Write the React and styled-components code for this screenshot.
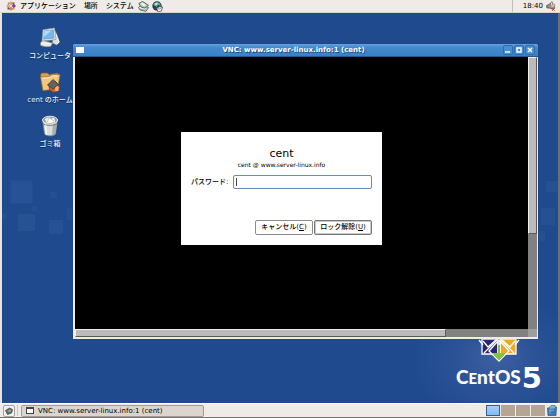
import React from "react";
import styled, { createGlobalStyle } from "styled-components";

const GlobalStyle = createGlobalStyle`
  * { box-sizing: border-box; }
  body {
    margin: 0;
    font-family: "DejaVu Sans", "Noto Sans CJK JP", sans-serif;
    font-size: 7px;
    font-weight: 500;
    line-height: 10px;
    color: #000;
  }
  button, input { font: inherit; color: inherit; margin: 0; padding: 0; }
  svg { display: block; flex: none; }
`;

const Screen = styled.div`
  min-height: 100vh;
  display: grid;
  grid-template-rows: 13px 1fr 15px;
  background: #1f4b8e;
`;

const TopPanel = styled.header`
  display: flex;
  align-items: center;
  padding: 0 4px 0 6px;
  background: #efebe7;
  border-bottom: 1px solid #d8d3cd;
`;

const Menus = styled.nav`
  display: flex;
  align-items: center;
  gap: 8px;
  margin: 0 4px;
`;

const MenuButton = styled.button`
  border: 0;
  background: none;
  white-space: nowrap;
`;

const Launcher = styled.button`
  border: 0;
  background: none;
  margin-right: 3px;
`;

const Tray = styled.div`
  display: flex;
  align-items: center;
  gap: 3px;
  align-self: stretch;
  margin-left: auto;
  padding-left: 10px;
  border-left: 1px solid #c5beb7;
`;

const Desktop = styled.main`
  position: relative;
  display: flex;
  justify-content: space-between;
  border-left: 2px solid #e8e4df;
  border-right: 2px solid #6b7078;
  overflow: hidden;
  background:
    radial-gradient(ellipse 84px 66px at calc(100% - 62px) calc(100% - 44px), #3d5fa2 0%, #2b5296 50%, transparent 100%),
    #1f4b8e;
`;

const Squares = styled.svg`
  position: absolute;
  top: 160px;
  ${(p) => (p.$side === "right" ? "right: 0;" : "left: 0;")}
`;

const IconList = styled.ul`
  list-style: none;
  margin: 0;
  padding: 14px 0 0;
  width: 96px;
`;

const IconItem = styled.li`
  display: flex;
  flex-direction: column;
  align-items: center;
  height: 44px;
  gap: 2px;
`;

const IconLabel = styled.span`
  color: #eef3fb;
  white-space: nowrap;
  text-shadow: 0 1px 1px #0c2450;
`;

const Brand = styled.div`
  display: flex;
  flex-direction: column;
  align-items: center;
  align-self: flex-end;
  padding: 0 16px 11px 0;
  color: #fff;
`;

const BrandName = styled.div`
  display: flex;
  align-items: center;
  gap: 1px;
  font-family: Lato, sans-serif;
  font-weight: 900;
  font-size: 19px;
  line-height: 28px;
`;

const SmallCap = styled.span`
  font-size: 15px;
  text-transform: uppercase;
`;

const BrandVersion = styled.span`
  font-family: "DejaVu Sans", sans-serif;
  font-weight: 700;
  font-size: 29px;
`;

const Window = styled.section`
  position: absolute;
  inset: 31px 20px 64px 71px;
  display: flex;
  flex-direction: column;
  border-radius: 3px 3px 0 0;
  background: #efebe5;
  box-shadow: 0 0 1px #16305c;
`;

const TitleBar = styled.div`
  display: grid;
  grid-template-columns: 12px 1fr 36px;
  align-items: center;
  height: 13px;
  padding: 0 3px;
  border-radius: 3px 3px 0 0;
  background: linear-gradient(#65a3dd, #4289d0 30%, #3b80c5);
  border-bottom: 1px solid #28588e;
`;

const WindowTitle = styled.h1`
  margin: 0;
  font-size: 7px;
  font-weight: 700;
  text-align: center;
  color: #fff;
  text-shadow: 1px 1px 0 #1d4b83;
  white-space: nowrap;
`;

const WindowControls = styled.div`
  display: flex;
  justify-content: flex-end;
  gap: 1px;
`;

const ControlButton = styled.button`
  width: 10px;
  height: 10px;
  border: 1px solid #2e6cae;
  border-radius: 2px;
  background: #4a8fd2;
`;

const Viewport = styled.div`
  flex: 1;
  display: grid;
  grid-template-columns: 1fr 9px;
  grid-template-rows: 1fr 8px;
  padding: 0 1px 2px 2px;
`;

const RemoteScreen = styled.div`
  display: flex;
  align-items: center;
  justify-content: center;
  padding: 0 40px 10px 0;
  background: #000;
`;

const Track = styled.div`
  display: flex;
  flex-direction: ${(p) => (p.$vertical ? "column" : "row")};
  background: #81817f;
`;

const Thumb = styled.div`
  flex: 0 0 ${(p) => p.$length};
  background: #bcbaba;
  border: 1px solid #efefed;
  border-right-color: #5c5a58;
  border-bottom-color: #5c5a58;
`;

const Corner = styled.div`
  background: #a09e9b;
`;

const Dialog = styled.form`
  display: flex;
  flex-direction: column;
  width: 201px;
  padding: 15px 10px 10px;
  background: #fff;
`;

const UserName = styled.h2`
  margin: 0;
  font-size: 11px;
  line-height: 14px;
  font-weight: 400;
  text-align: center;
  color: #000;
`;

const HostName = styled.p`
  margin: 0 0 6px;
  font-size: 6px;
  line-height: 8px;
  text-align: center;
`;

const PasswordRow = styled.div`
  display: flex;
  align-items: center;
  gap: 4px;
  margin-bottom: 31px;
`;

const PasswordLabel = styled.label`
  width: 38px;
  white-space: nowrap;
`;

const PasswordInput = styled.input`
  flex: 1;
  min-width: 0;
  height: 14px;
  padding: 0 3px;
  border: 1px solid #6b8ab8;
  border-radius: 2px;
  outline: 0;
  background: linear-gradient(#444, #444) 2px 2px / 1px 8px no-repeat #fff;
`;

const Actions = styled.div`
  display: flex;
  justify-content: flex-end;
  gap: 1px;
`;

const ActionButton = styled.button`
  width: 58px;
  height: 15px;
  border: 1px solid ${(p) => (p.$primary ? "#777" : "#8c8c86")};
  border-radius: 2px;
  background: #fff;
  box-shadow: ${(p) => (p.$primary ? "inset 0 0 0 1px #c9c9c9" : "none")};
  white-space: nowrap;
`;

const BottomPanel = styled.footer`
  display: flex;
  align-items: center;
  padding: 0 3px;
  background: #efebe7;
  border-top: 1px solid #fff;
  border-bottom: 1px solid #77736f;
`;

const ShowDesktop = styled.button`
  display: flex;
  align-items: center;
  justify-content: center;
  width: 12px;
  height: 12px;
  border: 1px solid #a9a29b;
  border-radius: 2px;
  background: #f3f0ed;
`;

const Divider = styled.div`
  align-self: stretch;
  width: 1px;
  margin: 1px 3px 1px 2px;
  background: #cdc6bf;
`;

const TaskButton = styled.button`
  display: flex;
  align-items: center;
  gap: 4px;
  flex: 0 1 183px;
  height: 12px;
  padding: 0 4px;
  border: 1px solid #a39b93;
  border-radius: 2px;
  background: #dcd5cd;
  white-space: nowrap;
`;

const Workspaces = styled.div`
  display: flex;
  gap: 1px;
  margin: 0 2px 0 auto;
`;

const Workspace = styled.button`
  width: 14px;
  height: 11px;
  border: ${(p) => (p.$active ? "1px solid #34608f" : "0")};
  background: ${(p) => (p.$active ? "linear-gradient(#a6d0fb, #84b8f2)" : "#b5a693")};
`;

const TrashButton = styled.button`
  border: 0;
  background: none;
`;

const CentIcon = () => (
  <svg width="10" height="10" viewBox="0 0 10 10">
    <path d="M2 1.500h2.500v3H1.500z" fill="#b884a8" />
    <path d="M5.500 1.500h3v3h-3z" fill="#7d4f9c" />
    <path d="M1.500 5.500h3v3h-3z" fill="#5e4c94" />
    <path d="M5.500 5.500h3v3h-3z" fill="#c89048" />
    <path d="M5 0l1.800 2L5 4.500 3.200 2z" fill="#e2a846" />
    <path d="M0 5l2-1.800L4.500 5 2 6.800z" fill="#e0b070" />
    <path d="M10 5L8 3.200 5.500 5 8 6.800z" fill="#7b3d8c" />
    <path d="M5 10l1.800-2L5 5.500 3.200 8z" fill="#d58a5a" />
    <path d="M3 3l4 4M7 3L3 7" stroke="#f4e9e6" strokeWidth=".7" />
  </svg>
);

const NotesIcon = () => (
  <svg width="11" height="11" viewBox="0 0 11 11">
    <path d="M.5 6.500L3 4l7.500 2.500L8 10.300 2 9z" fill="#dfe9e0" stroke="#3a5750" strokeWidth=".8" />
    <path d="M.8 2.500L4.500.5l6 3.800L7 7 3 6z" fill="#b9cdbd" stroke="#35514a" strokeWidth=".8" />
    <path d="M2.500 2.700L4.500 1.600 8 4 6 5.200z" fill="#eff5ec" />
    <path d="M2 8l5 1.200L9.500 7" fill="none" stroke="#71857a" strokeWidth=".6" />
  </svg>
);

const GlobeIcon = () => (
  <svg width="11" height="11" viewBox="0 0 11 11">
    <circle cx="5" cy="5" r="4.700" fill="#263f49" />
    <path d="M1.500 4C2 1.500 5 .5 7.500 2L9 5 6 4 4.500 6z" fill="#62a6ad" />
    <path d="M2.300 3.500C3 1.800 5 1.200 6 2L4.500 4z" fill="#c8f0ec" />
    <path d="M4.500 7l3.500-1.500L10.500 6l-1 4-3.500 1z" fill="#e9ede9" stroke="#34434b" strokeWidth=".7" />
    <path d="M4.500 7l3 1L10.500 6" fill="none" stroke="#59716f" strokeWidth=".6" />
  </svg>
);

const SpeakerIcon = () => (
  <svg width="10" height="10" viewBox="0 0 10 10">
    <path d="M.5 4.500L3 3.500 6 .7 7.500 8.500 3.500 7 1 7z" fill="#96918b" stroke="#514c49" strokeWidth=".8" />
    <path d="M5.500 1.500L6.500 7" stroke="#f3f0ed" strokeWidth="1" />
    <path d="M7.500 2.500q2 1.500.8 4" fill="none" stroke="#635a56" strokeWidth=".8" />
    <path d="M6 6.500l3 3M9 6.500L6 9.500" stroke="#a8554a" strokeWidth="1.100" />
  </svg>
);

const ComputerIcon = () => (
  <svg width="22" height="22" viewBox="0 0 22 22">
    <path d="M13.500 5l3-.8 4 11-3 2.800-4-2z" fill="#dfe0dc" stroke="#82888b" strokeWidth=".7" />
    <path d="M17 7l3 8-2 2" fill="none" stroke="#f9f9f5" />
    <path d="M1.500 15.500l2.500-2 9.500 2.500-1.500 3.200c-3 1-8 .5-10.500-1z" fill="#eeeee9" stroke="#777f84" strokeWidth=".7" />
    <path d="M4 2.800L15.500 1 17 12.500 3 14z" fill="#f6f6f1" stroke="#8a9397" strokeWidth=".7" />
    <path d="M5.300 4L14.300 2.700 15.200 11.200 4.600 12.300z" fill="#72b9ed" stroke="#4c87b9" strokeWidth=".5" />
    <path d="M5.500 4.200l7-1L5 10z" fill="#b5dcf7" />
  </svg>
);

const HomeFolderIcon = () => (
  <svg width="22" height="22" viewBox="0 0 22 22">
    <path d="M1.500 4l1-2h6l1.500 1.500 9-1.500v15L4 19z" fill="#d8a455" stroke="#805a28" strokeWidth=".8" />
    <path d="M1.500 6l10-1 1.500-1.500 8 0-2.500 14.500L4 19.500z" fill="#f0c681" stroke="#9c7137" strokeWidth=".7" />
    <path d="M3 7.500l9-1 1.500-1.500h5" fill="none" stroke="#ffe6b5" />
    <path d="M10 14l6-4 5 6-1 4-6 1.500-3.500-3z" fill="#d5642c" stroke="#62331e" strokeWidth=".7" />
    <path d="M8.500 14L14 8.500l5.500 5L14 18z" fill="#65645e" stroke="#383a38" strokeWidth=".8" />
    <path d="M16 17l2-2 1.500 1v3.500l-3 1z" fill="#ffb475" />
  </svg>
);

const TrashIcon = () => (
  <svg width="22" height="22" viewBox="0 0 22 22">
    <path d="M3.500 5l2 14c2 2.500 9 2.500 11 0l2-14z" fill="#dadddc" stroke="#727a7c" strokeWidth=".8" />
    <path d="M14 9l-1 11c2-.2 3-.6 3.500-1.300L18 8z" fill="#a8afb0" />
    <path d="M6.500 9l1 10.500" stroke="#f8faf9" strokeWidth="1.500" />
    <ellipse cx="11" cy="5" rx="7.500" ry="3.700" fill="#969d9d" stroke="#eef0ef" />
    <path d="M5.500 4l4-2 2 1.500 4-1 1 4.500-5 1.500-4-.5z" fill="#fcfcfa" stroke="#8b9190" strokeWidth=".5" />
    <path d="M9.500 2.500L8.500 7M12 4l3 2" stroke="#929898" strokeWidth=".6" />
    <path d="M4 8.500c2 2.500 12 2.500 14 0" fill="none" stroke="#60696c" strokeWidth=".8" />
  </svg>
);

const CentEmblem = () => (
  <svg width="48" height="48" viewBox="0 0 48 48">
    <g stroke="#fff" strokeWidth="1.300">
      <path d="M7 8h16v15H7z" fill="#9ccd2a" />
      <path d="M25 8h16v15H25z" fill="#932279" />
      <path d="M7 24h16v15H7z" fill="#262577" />
      <path d="M25 24h16v15H25z" fill="#efa724" />
      <path d="M4 25l4 5M44 25l-4 5" fill="none" />
      <path d="M8 26l5 6 9-8M40 26l-5 6-9-8" fill="none" />
      <path d="M9 38l13-13M39 38L26 25" fill="none" />
      <path d="M23 26L14 36l10 10 10-10-9-10v13h-2z" fill="none" />
    </g>
    <path d="M23 30h2v8h6l-7 7-7-7h6z" fill="#85c53a" />
  </svg>
);

const WindowIcon = () => (
  <svg width="8" height="7" viewBox="0 0 8 7">
    <path d="M0 0h8v7H0z" fill="#444" />
    <path d="M1 2h6v4H1z" fill="#fff" />
  </svg>
);

const DesktopIcon = () => (
  <svg width="8" height="8" viewBox="0 0 8 8">
    <path d="M.5 3.500L4.500 1l3 1.500-1 3.500-4 1.500z" fill="#66726c" stroke="#454e4b" strokeWidth=".8" />
    <path d="M2.500 4l3-1.500.5 1.500-2 1z" fill="#a1b1ab" />
  </svg>
);

const PanelTrashIcon = () => (
  <svg width="10" height="11" viewBox="0 0 10 11">
    <path d="M.5 3l9-1-.5 8.500H1z" fill="#3d78b5" stroke="#285587" strokeWidth=".7" />
    <path d="M2 2.500l2-2h4l1 3-6 1z" fill="#7badd8" stroke="#386b9e" strokeWidth=".6" />
    <path d="M2 6l5-1M3 4v5" stroke="#75a8d5" />
  </svg>
);

const ICONS = [
  { label: "コンピュータ", Icon: ComputerIcon },
  { label: "cent のホーム", Icon: HomeFolderIcon },
  { label: "ゴミ箱", Icon: TrashIcon },
];

const CONTROLS = [
  { label: "最小化", path: "M1 6h5" },
  { label: "最大化", path: "M2 2h4v4H2z" },
  { label: "閉じる", path: "M2 2l4 4M6 2L2 6" },
];

const TITLE = "VNC: www.server-linux.info:1 (cent)";

export default function App() {
  return (
    <Screen lang="ja">
      <GlobalStyle />
      <TopPanel>
        <CentIcon />
        <Menus>
          <MenuButton>アプリケーション</MenuButton>
          <MenuButton>場所</MenuButton>
          <MenuButton>システム</MenuButton>
        </Menus>
        <Launcher aria-label="メール"><NotesIcon /></Launcher>
        <Launcher aria-label="ブラウザ"><GlobeIcon /></Launcher>
        <Tray>
          <time>18:40</time>
          <SpeakerIcon />
        </Tray>
      </TopPanel>

      <Desktop>
        <Squares width="70" height="70" fill="#6f8fd0" aria-hidden="true">
          <path d="M8 7h22v23H8z" opacity=".07" />
          <path d="M10 9h21v22H10z" opacity=".06" />
          <path d="M16 41h17v17H16z" opacity=".1" />
          <path d="M47 47h14v14H47z" opacity=".09" />
          <path d="M48 19h7v6h-7zM30 33h5v5h-5zM0 41h5v5H0zM65 35h5v12h-5z" opacity=".07" />
        </Squares>
        <Squares $side="right" width="20" height="70" fill="#6f8fd0" aria-hidden="true">
          <path d="M8 8h12v11H8zM3 35h14v17H3zM1 58h6v10H1z" opacity=".08" />
        </Squares>
        <IconList>
          {ICONS.map(({ label, Icon }) => (
            <IconItem key={label}>
              <Icon />
              <IconLabel>{label}</IconLabel>
            </IconItem>
          ))}
        </IconList>
        <Brand>
          <CentEmblem />
          <BrandName>
            <span>C<SmallCap>e</SmallCap>ntOS</span>
            <BrandVersion>5</BrandVersion>
          </BrandName>
        </Brand>

        <Window>
          <TitleBar>
            <svg width="8" height="6" viewBox="0 0 8 6"><path d="M0 0h8v6H0z" fill="#fff" /></svg>
            <WindowTitle>{TITLE}</WindowTitle>
            <WindowControls>
              {CONTROLS.map(({ label, path }) => (
                <ControlButton key={label} aria-label={label}>
                  <svg width="8" height="8" viewBox="0 0 8 8">
                    <path d={path} fill="none" stroke="#fff" strokeWidth="1.400" />
                  </svg>
                </ControlButton>
              ))}
            </WindowControls>
          </TitleBar>
          <Viewport>
            <RemoteScreen>
              <Dialog onSubmit={(e) => e.preventDefault()}>
                <UserName>cent</UserName>
                <HostName>cent @ www.server-linux.info</HostName>
                <PasswordRow>
                  <PasswordLabel htmlFor="password">パスワード:</PasswordLabel>
                  <PasswordInput id="password" type="password" />
                </PasswordRow>
                <Actions>
                  <ActionButton type="button">キャンセル(<u>C</u>)</ActionButton>
                  <ActionButton type="submit" $primary>ロック解除(<u>U</u>)</ActionButton>
                </Actions>
              </Dialog>
            </RemoteScreen>
            <Track $vertical><Thumb $length="65%" /></Track>
            <Track><Thumb $length="82%" /></Track>
            <Corner />
          </Viewport>
        </Window>
      </Desktop>

      <BottomPanel>
        <ShowDesktop aria-label="デスクトップを表示"><DesktopIcon /></ShowDesktop>
        <Divider />
        <TaskButton>
          <WindowIcon />
          {TITLE}
        </TaskButton>
        <Workspaces>
          {[1, 2, 3, 4].map((n) => (
            <Workspace key={n} $active={n === 1} aria-label={`ワークスペース ${n}`} />
          ))}
        </Workspaces>
        <TrashButton aria-label="ゴミ箱"><PanelTrashIcon /></TrashButton>
      </BottomPanel>
    </Screen>
  );
}
